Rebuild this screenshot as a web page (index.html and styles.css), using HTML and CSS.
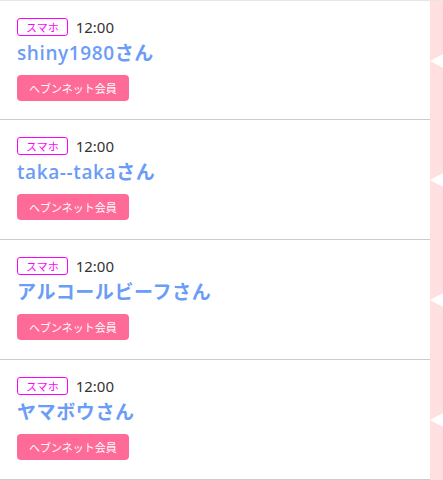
FILE: index.html
```html
<!DOCTYPE html>
<html lang="ja">
<head>
  <meta charset="UTF-8">
  <meta name="viewport" content="width=device-width, initial-scale=1.0">
  <title>会員一覧</title>
  <link rel="stylesheet" href="styles.css">
</head>
<body>

<ul class="member-list">
  <li class="member">
    <div class="member-body">
      <div class="meta">
        <span class="device">スマホ</span>
        <span class="time">12:00</span>
      </div>
      <div class="name">shiny1980さん</div>
      <span class="badge">ヘブンネット会員</span>
    </div>
    <div class="side"></div>
  </li>
  <li class="member">
    <div class="member-body">
      <div class="meta">
        <span class="device">スマホ</span>
        <span class="time">12:00</span>
      </div>
      <div class="name">taka--takaさん</div>
      <span class="badge">ヘブンネット会員</span>
    </div>
    <div class="side"></div>
  </li>
  <li class="member">
    <div class="member-body">
      <div class="meta">
        <span class="device">スマホ</span>
        <span class="time">12:00</span>
      </div>
      <div class="name">アルコールビーフさん</div>
      <span class="badge">ヘブンネット会員</span>
    </div>
    <div class="side"></div>
  </li>
  <li class="member">
    <div class="member-body">
      <div class="meta">
        <span class="device">スマホ</span>
        <span class="time">12:00</span>
      </div>
      <div class="name">ヤマボウさん</div>
      <span class="badge">ヘブンネット会員</span>
    </div>
    <div class="side"></div>
  </li>
</ul>

</body>
</html>
```

FILE: styles.css
```css
body {
  margin: 0;
  background-color: #fff;
  font-family: "Noto Sans CJK JP", "Noto Sans", sans-serif;
}

.member-list {
  list-style: none;
  margin: 0;
  padding: 0;
  border-top: 1px solid #e6e6e6;
}

.member {
  display: flex;
  height: 120px;
}

.member:first-child {
  height: 119px;
}

.member-body {
  flex: 1;
  padding: 17px 0 0 17px;
  border-bottom: 1px solid #cccccc;
}

.meta {
  display: flex;
  align-items: center;
  gap: 8px;
  height: 18px;
}

.device {
  box-sizing: border-box;
  height: 18px;
  padding: 0 8px;
  border: 1px solid #f0f;
  border-radius: 3px;
  color: #f0f;
  font-size: 11px;
  line-height: 16px;
}

.time {
  color: #333;
  font-size: 15px;
  line-height: 18px;
  font-family: "Noto Sans", sans-serif;
}

.name {
  margin-top: 4px;
  color: #6b9cf7;
  font-family: "Open Sans", "Noto Sans CJK JP", sans-serif;
  font-size: 19px;
  font-weight: 600;
  letter-spacing: 0.6px;
  line-height: 26px;
}

.badge {
  display: inline-block;
  margin-top: 9px;
  height: 26px;
  padding: 0 12px;
  border-radius: 4px;
  background-color: #ff6b98;
  color: #fff;
  font-size: 11px;
  line-height: 26px;
}

.side {
  position: relative;
  width: 13px;
  background-color: #ffdfe0;
}

/* little white notch pointing left */
.side::after {
  content: "";
  position: absolute;
  top: 50%;
  right: 0;
  margin-top: -7px;
  border-top: 7px solid transparent;
  border-bottom: 7px solid transparent;
  border-right: 13px solid #fff;
}
```
